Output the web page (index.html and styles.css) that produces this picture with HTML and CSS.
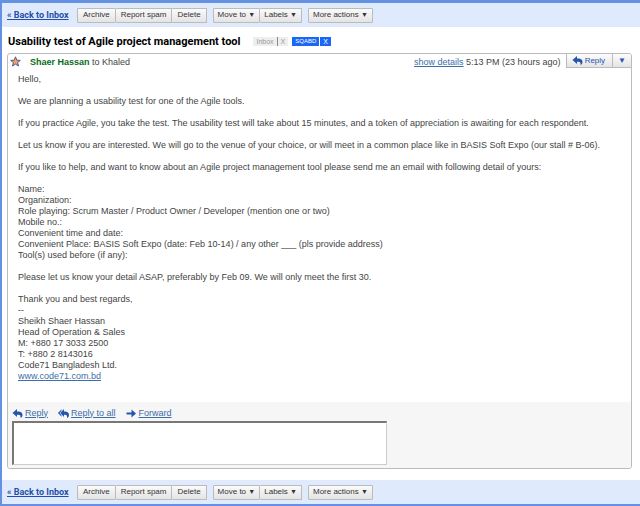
FILE: index.html
```html
<!DOCTYPE html>
<html lang="en">
<head>
  <meta charset="UTF-8">
  <meta name="viewport" content="width=device-width, initial-scale=1.0">
  <title>Usability test of Agile project management tool</title>
  <link rel="stylesheet" href="styles.css">
</head>
<body>
  <svg class="sprite" aria-hidden="true">
    <symbol id="icon-reply" viewBox="0 0 10 9">
      <path d="M0 4 4.500 0v2.500h1.500c2.500 0 4 1.500 4 3.500 0 1.500-.8 2.500-2 3 .4-2-.3-3.200-2-3.200H4.500V8z"/>
    </symbol>
    <symbol id="icon-reply-all" viewBox="0 0 11 9">
      <path d="M0 4 3.500.3v1.500L1.600 4l1.900 2.200v1.500zM2.300 4 6 0v2.500h1c2.500 0 4 1.500 4 3.500 0 1.500-.8 2.500-2 3 .4-2-.3-3.200-2-3.200H6V8z"/>
    </symbol>
    <symbol id="icon-forward" viewBox="0 0 10 9">
      <path d="M0 3.500h5V.5l4.500 4L5 8.500v-3H0z"/>
    </symbol>
  </svg>

  <nav class="toolbar">
    <a class="back" href="#">« Back to Inbox</a>
    <div class="group">
      <button type="button">Archive</button>
      <button type="button">Report spam</button>
      <button type="button">Delete</button>
    </div>
    <div class="group menus">
      <button type="button">Move to <span class="caret">▼</span></button>
      <button type="button">Labels <span class="caret">▼</span></button>
    </div>
    <div class="group menus">
      <button type="button">More actions <span class="caret">▼</span></button>
    </div>
  </nav>

  <main>
    <div class="subject">
      <h1>Usability test of Agile project management tool</h1>
      <span class="label"><span>Inbox</span><button type="button">X</button></span>
      <span class="label label-blue"><span>SQABD</span><button type="button">X</button></span>
    </div>

    <article class="message">
      <header class="message-head">
        <svg class="star" viewBox="0 0 11 11" aria-hidden="true">
          <path d="M5.500.8 6.800 4.200l3.500.2-2.700 2.200.9 3.400-3-1.900-3 1.900.9-3.400L.7 4.400l3.500-.2z"/>
        </svg>
        <span class="sender"><b>Shaer Hassan</b> to Khaled</span>
        <span class="date"><a href="#">show details</a> 5:13 PM (23 hours ago)</span>
        <div class="reply-menu">
          <button type="button"><svg class="icon"><use href="#icon-reply"/></svg>Reply</button>
          <button type="button" class="more" aria-label="More">▼</button>
        </div>
      </header>

      <div class="message-body">
        <p>Hello,</p>
        <p>We are planning a usability test for one of the Agile tools.</p>
        <p>If you practice Agile, you take the test. The usability test will take about 15 minutes, and a token of appreciation is awaiting for each respondent.</p>
        <p>Let us know if you are interested. We will go to the venue of your choice, or will meet in a common place like in BASIS Soft Expo (our stall # B-06).</p>
        <p>If you like to help, and want to know about an Agile project management tool please send me an email with following detail of yours:</p>
        <p>
          Name:<br>
          Organization:<br>
          Role playing: Scrum Master / Product Owner / Developer (mention one or two)<br>
          Mobile no.:<br>
          Convenient time and date:<br>
          Convenient Place: BASIS Soft Expo (date: Feb 10-14) / any other ___ (pls provide address)<br>
          Tool(s) used before (if any):
        </p>
        <p>Please let us know your detail ASAP, preferably by Feb 09. We will only meet the first 30.</p>
        <p>
          Thank you and best regards,<br>
          --<br>
          Sheikh Shaer Hassan<br>
          Head of Operation &amp; Sales<br>
          M: +880 17 3033 2500<br>
          T: +880 2 8143016<br>
          Code71 Bangladesh Ltd.<br>
          <a href="#">www.code71.com.bd</a>
        </p>
      </div>

      <footer class="message-foot">
        <div class="actions">
          <span><svg class="icon"><use href="#icon-reply"/></svg><a href="#">Reply</a></span>
          <span><svg class="icon"><use href="#icon-reply-all"/></svg><a href="#">Reply to all</a></span>
          <span><svg class="icon"><use href="#icon-forward"/></svg><a href="#">Forward</a></span>
        </div>
        <textarea aria-label="Reply text"></textarea>
      </footer>
    </article>
  </main>

  <nav class="toolbar">
    <a class="back" href="#">« Back to Inbox</a>
    <div class="group">
      <button type="button">Archive</button>
      <button type="button">Report spam</button>
      <button type="button">Delete</button>
    </div>
    <div class="group menus">
      <button type="button">Move to <span class="caret">▼</span></button>
      <button type="button">Labels <span class="caret">▼</span></button>
    </div>
    <div class="group menus">
      <button type="button">More actions <span class="caret">▼</span></button>
    </div>
  </nav>
</body>
</html>
```

FILE: styles.css
```css
* {
  box-sizing: border-box;
}
body {
  margin: 0;
  border: solid #6491e2;
  border-width: 3px 0 2px 2px;
  background: #fff;
  color: #444;
  font-family: "Liberation Sans", Arial, sans-serif;
  font-size: 9px;
  line-height: 11px;
}
a {
  color: #3d6ea8;
}
button {
  font-family: inherit;
  cursor: pointer;
}
.sprite {
  display: none;
}
.icon {
  width: 11px;
  height: 9px;
  fill: #2355b0;
}

/* toolbar */
.toolbar {
  display: flex;
  align-items: center;
  gap: 6px;
  height: 24px;
  padding: 0 5px;
  background: #dfebfd;
}
.back {
  width: 64px;
  color: #1f4fa8;
  font-family: Roboto, "Liberation Sans", sans-serif;
  font-weight: bold;
  white-space: nowrap;
}
.group {
  display: flex;
}
.group button {
  height: 15px;
  padding: 0 5px;
  border: 1px solid #bbb;
  border-radius: 1px;
  background: linear-gradient(#fafafa, #e4e4e4);
  color: #333;
  font-size: 8px;
  line-height: 12px;
  white-space: nowrap;
}
.group button + button {
  border-left: 0;
}
.menus button {
  padding: 0 4px;
}
.caret {
  font-size: 7px;
}

/* subject line */
.subject {
  display: flex;
  align-items: center;
  gap: 4px;
  height: 26px;
  padding: 3px 6px 0;
}
.subject h1 {
  margin: 0 9px 0 0;
  color: #000;
  font-family: Roboto, "Liberation Sans", sans-serif;
  font-size: 11px;
}
.label {
  display: flex;
  height: 9px;
  background: #eee;
  color: #999;
  font-size: 7px;
  line-height: 9px;
}
.label span {
  padding: 0 3px;
}
.label button {
  padding: 0 3px;
  border: 0;
  border-left: 1px solid #888;
  background: none;
  color: inherit;
  font-size: 7px;
  line-height: 9px;
}
.label-blue {
  background: #1a66f5;
  color: #fff;
}
.label-blue span {
  font-size: 6px;
}
.label-blue button {
  border-color: #fff;
}

/* message card */
.message {
  margin: 0 8px 11px 5px;
  border: 1px solid #bbb;
  border-radius: 3px;
  overflow: hidden;
}
.message-head {
  display: flex;
  align-items: flex-start;
  height: 20px;
  padding-left: 2px;
  line-height: 16px;
}
.star {
  width: 11px;
  height: 11px;
  margin: 2px 9px 0 0;
  fill: #f5a05a;
  stroke: #4a5a9a;
}
.sender {
  flex: 1;
}
.sender b {
  color: #0a6a1c;
}
.date {
  margin-right: 5px;
}
.reply-menu {
  display: flex;
}
.reply-menu button {
  display: flex;
  align-items: center;
  gap: 2px;
  height: 14px;
  padding: 0 7px 0 5px;
  border: solid #bbb;
  border-width: 0 0 1px 1px;
  background: linear-gradient(#fdfdfd, #e4e4e4);
  color: #2355b0;
  font-size: 8px;
}
.reply-menu .more {
  padding: 0 5px;
  font-size: 8px;
}
.message-body {
  padding: 0 10px 9px;
}
.message-body p {
  margin: 0 0 11px;
}
.message-foot {
  padding: 3px 4px;
  background: #f6f6f6;
}
.actions {
  display: flex;
  gap: 10px;
  height: 16px;
}
.actions span {
  display: flex;
  align-items: center;
  gap: 2px;
}
textarea {
  display: block;
  width: 61%;
  height: 44px;
  border: solid #ccc;
  border-width: 2px 1px 1px 2px;
  border-top-color: #777;
  border-left-color: #777;
  border-radius: 0;
  background: #fff;
  font: inherit;
  resize: none;
}
```
